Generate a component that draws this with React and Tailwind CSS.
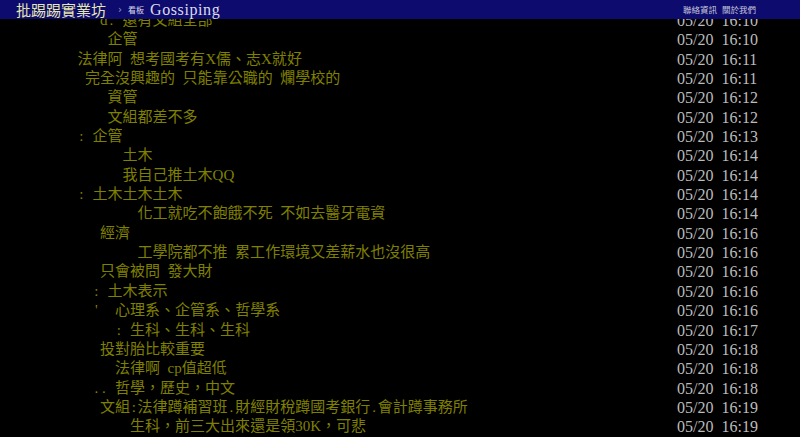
const rows = [
  [3, 'd. 還有文組全部', '16:10'],
  [4, '企管', '16:10'],
  [0, '法律阿 想考國考有X儒、志X就好', '16:11'],
  [1, '完全沒興趣的 只能靠公職的 爛學校的', '16:11'],
  [4, '資管', '16:12'],
  [4, '文組都差不多', '16:12'],
  [0, ': 企管', '16:13'],
  [6, '土木', '16:14'],
  [6, '我自己推土木QQ', '16:14'],
  [0, ': 土木土木土木', '16:14'],
  [8, '化工就吃不飽餓不死 不如去醫牙電資', '16:14'],
  [3, '經濟', '16:16'],
  [8, '工學院都不推 累工作環境又差薪水也沒很高', '16:16'],
  [3, '只會被問 發大財', '16:16'],
  [2, ': 土木表示', '16:16'],
  [2, "'  心理系、企管系、哲學系", '16:16'],
  [5, ': 生科、生科、生科', '16:17'],
  [3, '投對胎比較重要', '16:18'],
  [5, '法律啊 cp值超低', '16:18'],
  [2, '.. 哲學，歷史，中文', '16:18'],
  [3, '文組:法律蹲補習班.財經財稅蹲國考銀行.會計蹲事務所', '16:19'],
  [7, '生科，前三大出來還是領30K，可悲', '16:19'],
]

// half-width cells like the terminal font: spaces and ascii punctuation take 7.5px
function Cells({ indent, text }) {
  const chars = [...('\u2002'.repeat(indent) + text)]
  return chars.map((c, i) => {
    if (c === ' ') return '\u2002'
    if (/[:.']/.test(c))
      return (
        <span key={i} className="inline-block w-[7.5px] text-center">
          {c}
        </span>
      )
    return c
  })
}

export default function App() {
  return (
    <div className="relative w-[800px] h-[437px] overflow-hidden bg-black">
      <div className="absolute top-0 left-0 right-0 z-10 h-[19px] bg-[#0d0b6e] flex items-center">
        <span className="ml-[16px] text-[15px] leading-none text-[#e6e6b0] font-['Noto_Sans_CJK_TC',sans-serif]">
          批踢踢實業坊
        </span>
        <span className="ml-[12px] text-[10px] leading-none text-[#9a9ab8] font-['DejaVu_Sans',sans-serif]">›</span>
        <span className="ml-[6px] text-[8px] leading-none text-[#d8d8e8] font-['Noto_Sans_CJK_TC',sans-serif]">看板</span>
        <span className="ml-[6px] text-[16px] leading-none tracking-[0.6px] text-[#dcdcec] font-['Liberation_Serif',serif]">
          Gossiping
        </span>
        <div className="ml-auto mr-[44px] flex gap-[5px] text-[8.5px] leading-none text-[#c8c8dc] font-['Noto_Sans_CJK_TC',sans-serif]">
          <span>聯絡資訊</span>
          <span>關於我們</span>
        </div>
      </div>

      <div className="pt-[11px]">
        {rows.map(([indent, text, time], i) => (
          <div key={i} className="flex h-[19.35px] items-center">
            <div className="flex-1 pl-[77.5px] whitespace-pre text-[15px] leading-[19.35px] text-[#808000] font-['Liberation_Serif','Noto_Sans_CJK_TC',serif]">
              <Cells indent={indent} text={text} />
            </div>
            <div className="w-[123px] whitespace-pre text-[16px] leading-[19.35px] text-[#bcbcbc] font-['Liberation_Serif',serif]">
              {'05/20\u2002' + time}
            </div>
          </div>
        ))}
      </div>
    </div>
  )
}
